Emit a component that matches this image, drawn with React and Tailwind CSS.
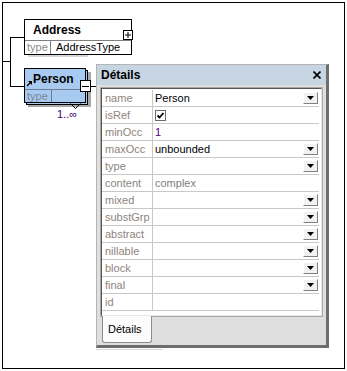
import React from "react";

const rows = [
  { label: "name", value: "Person", drop: true },
  { label: "isRef", check: true },
  { label: "minOcc", value: "1", color: "text-[#50007a]" },
  { label: "maxOcc", value: "unbounded", drop: true },
  { label: "type", drop: true },
  { label: "content", value: "complex", color: "text-[#808080]" },
  { label: "mixed", drop: true },
  { label: "substGrp", drop: true },
  { label: "abstract", drop: true },
  { label: "nillable", drop: true },
  { label: "block", drop: true },
  { label: "final", drop: true },
  { label: "id" },
];

const DropButton = () => (
  <div className="mr-[1px] flex h-[12px] w-[15px] items-center justify-center border-t border-l border-t-white border-l-white border-r border-b border-r-[#808080] border-b-[#808080] bg-[#f2f2f2]">
    <svg width="7" height="4" viewBox="0 0 7 4">
      <polygon points="0,0 7,0 3.5,4" fill="#000" />
    </svg>
  </div>
);

const CheckBox = () => (
  <div className="flex h-[11px] w-[11px] items-center justify-center border border-[#6a6a6a] bg-white">
    <svg width="9" height="9" viewBox="0 0 9 9">
      <polyline points="1.5,4.5 3.5,6.5 7.5,2" fill="none" stroke="#000" strokeWidth="1.8" />
    </svg>
  </div>
);

const DetailsPanel = () => {
  return (
    <div className="absolute left-[93px] top-[61px] flex h-[284px] w-[233px] flex-col border-t border-l border-[#b4b4b4] border-r-[3px] border-b-[3px] border-r-[#6e6e6e] border-b-[#6e6e6e] bg-[#dfdfdf]">
      {/* title bar */}
      <div className="flex h-[20px] items-center justify-between bg-[#c7d4e1] pl-[4px] pr-[5px]">
        <span className="text-[12px] font-bold text-black">Détails</span>
        <svg width="8" height="8" viewBox="0 0 8 8">
          <path d="M0.5 0.5 L7.5 7.5 M7.5 0.5 L0.5 7.5" stroke="#000" strokeWidth="1.6" />
        </svg>
      </div>

      {/* property grid */}
      <div className="ml-[3px] mt-[2px] h-[230px] w-[223px] border border-[#a8a8a8]">
        <div className="h-full w-full border-t border-l border-[#555] border-r border-b border-r-[#e8e8e8] border-b-[#e8e8e8] bg-white pt-[1px]">
          {rows.map((row, i) => (
            <div key={i} className="flex h-[17px] w-[217px] border-b border-[#c8c8c8]">
              <div className="flex w-[51px] items-center border-r border-[#c8c8c8] pl-[3px] text-[11px] text-[#8d847c]">
                {row.label}
              </div>
              <div className={"flex flex-1 items-center justify-between pl-[2px] text-[11px] " + (row.color || "text-black")}>
                {row.check ? <CheckBox /> : <span>{row.value}</span>}
                {row.drop && <DropButton />}
              </div>
            </div>
          ))}
        </div>
      </div>

      {/* tab strip */}
      <div className="flex-1">
        <div className="ml-[5px] -mt-[1px] flex h-[27px] w-[50px] items-center rounded-b-[3px] border border-t-0 border-[#8c8c8c] bg-[#fcfcfc] pl-[5px] text-[11px] text-black">
          Détails
        </div>
      </div>
    </div>
  );
};

export default function App() {
  return (
    <div className="h-[371px] w-[347px] bg-white pl-[2px] pt-[2px] font-['Liberation_Sans',Arial,sans-serif]">
      <div className="relative h-[367px] w-[343px] border border-black">
        {/* connectors */}
        <div className="absolute left-0 top-[58px] h-[1px] w-[8px] bg-black" />
        <div className="absolute left-[7px] top-[34px] h-[50px] w-[1px] bg-black" />
        <div className="absolute left-[7px] top-[34px] h-[1px] w-[14px] bg-black" />
        <div className="absolute left-[7px] top-[83px] h-[1px] w-[14px] bg-black" />

        {/* Address node */}
        <div className="absolute left-[25px] top-[52px] h-[2px] w-[60px] bg-[#d6d6d6]" />
        <div className="absolute left-[21px] top-[16px] flex h-[36px] w-[108px] flex-col border border-black bg-white">
          <div className="flex h-[20px] items-center pl-[8px] text-[12px] font-bold text-black">Address</div>
          <div className="flex h-[14px] border-t border-[#808080] text-[11px]">
            <div className="flex w-[26px] items-center border-r border-[#808080] pl-[2px] text-[#8a8a8a]">type</div>
            <div className="flex items-center pl-[5px] text-black">AddressType</div>
          </div>
        </div>
        <div className="absolute left-[120px] top-[27px] flex h-[10px] w-[10px] items-center justify-center border border-black bg-white">
          <svg width="8" height="8" viewBox="0 0 8 8">
            <path d="M1 4 H7 M4 1 V7" stroke="#000" strokeWidth="1" />
          </svg>
        </div>

        {/* Person node (with repeated copies) */}
        <div className="absolute left-[25px] top-[69px] h-[35px] w-[63px] bg-[#a8a8a8]" />
        <div className="absolute left-[23px] top-[67px] h-[35px] w-[62px] border border-black bg-[#a8caf0]" />
        <div className="absolute left-[21px] top-[65px] flex h-[35px] w-[62px] flex-col border border-black bg-[#a8caf0]">
          <div className="flex h-[20px] items-center pl-[8px] text-[12px] font-bold text-black">Person</div>
          <div className="flex h-[13px] border-t border-[#6b7f99] text-[11px]">
            <div className="flex w-[27px] items-center border-r border-[#6b7f99] pl-[2px] text-[#7d8794]">type</div>
          </div>
        </div>
        <svg className="absolute left-[23px] top-[77px]" width="7" height="7" viewBox="0 0 7 7">
          <path d="M1 6 L5 2" stroke="#000" strokeWidth="1.3" />
          <polygon points="2,1 6,1 6,5" fill="#000" />
        </svg>
        <div className="absolute left-[77px] top-[77px] flex h-[12px] w-[11px] items-center justify-center border border-black bg-white">
          <div className="h-[1px] w-[7px] bg-black" />
        </div>
        <div className="absolute left-[88px] top-[83px] h-[1px] w-[5px] bg-black" />
        <svg className="absolute left-[67px] top-[100px]" width="11" height="6" viewBox="0 0 11 6">
          <polyline points="0.5,0.5 5.5,5.5 10.5,0.5" fill="none" stroke="#000" strokeWidth="1" />
        </svg>
        <div className="absolute left-[54px] top-[105px] text-[11px] leading-[12px] text-[#400070]">1..∞</div>

        <DetailsPanel />
        <div className="absolute left-[93px] top-[346px] h-[1px] w-[67px] bg-[#d8d8d8]" />
      </div>
    </div>
  );
}
